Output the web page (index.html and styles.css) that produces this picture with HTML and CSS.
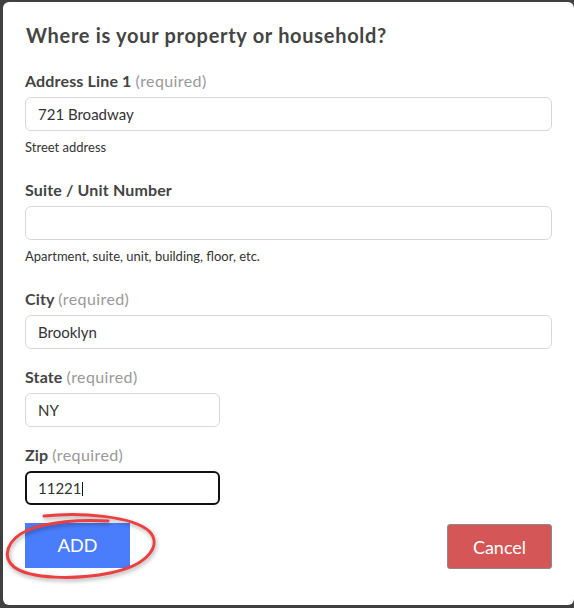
FILE: index.html
```html
<!DOCTYPE html>
<html lang="en">
<head>
<meta charset="utf-8">
<title>Where is your property or household?</title>
<link rel="stylesheet" href="styles.css">
</head>
<body>
<div class="backdrop">
  <div class="modal">
    <h2 class="title">Where is your property or household?</h2>

    <div class="field field-help">
      <label class="label">Address Line 1 <span class="req">(required)</span></label>
      <input class="input" type="text" value="721 Broadway">
      <div class="help">Street address</div>
    </div>

    <div class="field field-help">
      <label class="label">Suite / Unit Number</label>
      <input class="input" type="text" value="">
      <div class="help">Apartment, suite, unit, building, floor, etc.</div>
    </div>

    <div class="field">
      <label class="label">City <span class="req">(required)</span></label>
      <input class="input" type="text" value="Brooklyn">
    </div>

    <div class="field">
      <label class="label">State <span class="req">(required)</span></label>
      <input class="input input-short" type="text" value="NY">
    </div>

    <div class="field">
      <label class="label">Zip <span class="req">(required)</span></label>
      <div class="caret-wrap">
        <input class="input input-short input-focus" type="text" value="11221">
        <span class="caret"></span>
      </div>
    </div>

    <div class="actions">
      <div class="add-wrap">
        <button class="btn btn-add" type="button">ADD</button>
        <svg class="circle" width="170" height="76" viewBox="0 0 170 76">
          <path d="M44 5 C 80 1, 132 5, 149 20 C 162 33, 150 54, 110 62 C 75 69, 30 68, 14 56 C 2 46, 6 29, 28 19 C 48 11, 80 8, 108 10" fill="none" stroke="#ec3f3f" stroke-width="3" stroke-linecap="round"/>
        </svg>
      </div>
      <button class="btn btn-cancel" type="button">Cancel</button>
    </div>
  </div>
</div>
</body>
</html>
```

FILE: styles.css
```css
html, body {
  margin: 0;
  padding: 0;
}

body {
  width: 574px;
  height: 608px;
  overflow: hidden;
  background: #404040;
  font-family: Lato, "Open Sans", sans-serif;
}

.backdrop {
  padding: 2px 0 0 3px;
}

.modal {
  box-sizing: border-box;
  width: 571px;
  height: 603px;
  background: #ffffff;
  border-radius: 6px;
  padding: 21px 22px 0 22px;
}

.title {
  margin: 0 0 24px 1px;
  font-size: 20px;
  line-height: 24px;
  font-weight: 700;
  letter-spacing: 0.7px;
  color: #444444;
}

.field {
  margin-bottom: 18px;
}

.field-help {
  margin-bottom: 25px;
}

.label {
  display: block;
  font-size: 16px;
  line-height: 20px;
  font-weight: 700;
  letter-spacing: 0.15px;
  color: #444444;
  margin-bottom: 6px;
}

.req {
  font-weight: 400;
  letter-spacing: 0.4px;
  color: #999999;
}

.input {
  display: block;
  box-sizing: border-box;
  width: 527px;
  height: 34px;
  margin: 0;
  padding: 0 12px;
  border: 1px solid #d8d8d8;
  border-radius: 6px;
  background: #ffffff;
  font-family: Lato, "Open Sans", sans-serif;
  font-size: 15px;
  color: #333333;
  outline: none;
}

.input-short {
  width: 195px;
}

.input-focus {
  border: 2px solid #111111;
  padding: 0 11px;
}

.caret-wrap {
  position: relative;
  width: 195px;
}

.caret {
  position: absolute;
  left: 57px;
  top: 11px;
  width: 1px;
  height: 14px;
  background: #111111;
}

.help {
  margin-top: 8px;
  font-size: 13px;
  line-height: 16px;
  color: #333333;
}

.actions {
  display: flex;
  justify-content: space-between;
  align-items: flex-start;
}

.add-wrap {
  position: relative;
}

.btn {
  box-sizing: border-box;
  width: 105px;
  height: 45px;
  margin: 0;
  border: none;
  color: #ffffff;
  cursor: pointer;
}

.btn-add {
  background: #4a7dfc;
  font-family: "Liberation Sans", Arial, sans-serif;
  font-size: 19px;
  border-radius: 0;
}

.btn-cancel {
  background: #d45656;
  border: 1px solid #8a8a8a;
  border-radius: 3px;
  font-family: Lato, "Open Sans", sans-serif;
  font-size: 18px;
  margin-top: 1px;
}

.circle {
  position: absolute;
  left: -25px;
  top: -12px;
  filter: drop-shadow(1px 2px 2px rgba(0, 0, 0, 0.35));
  pointer-events: none;
}
```
